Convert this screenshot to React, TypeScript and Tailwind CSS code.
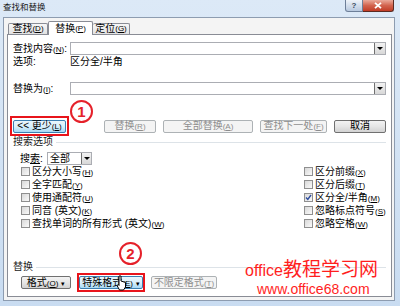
import React from 'react';

const Acc = ({ k }: { k: string }) => (
  <span className="text-[8px]">
    (<span className="underline">{k}</span>)
  </span>
);

type BtnKind = 'normal' | 'hover' | 'disabled';

const btnClass: Record<BtnKind, string> = {
  normal: 'border-[#707070] bg-linear-to-b from-[#f3f3f3] via-[#e6e6e6] to-[#d2d2d2] text-black',
  hover: 'border-[#3c7fb1] bg-linear-to-b from-[#eaf6fd] via-[#d9f0fc] to-[#a7d9f5] text-black',
  disabled: 'border-[#adb2b5] bg-[#f4f4f4] text-[#8d8d8d]',
};

const Btn = ({ w, kind = 'normal', children }: { w: string; kind?: BtnKind; children: React.ReactNode }) => (
  <div className={`${w} h-[13px] shrink-0 flex items-center justify-center rounded-[2px] border ${btnClass[kind]}`}>
    <span className="leading-none whitespace-nowrap">{children}</span>
  </div>
);

const DropInput = () => (
  <div className="flex-1 h-[13px] flex border border-[#abadb3] bg-white">
    <div className="flex-1" />
    <div className="w-[11px] h-full border-l border-[#707070] bg-linear-to-b from-[#f2f2f2] to-[#d8d8d8] flex items-center justify-center">
      <div className="w-0 h-0 border-l-[3px] border-r-[3px] border-t-[3px] border-l-transparent border-r-transparent border-t-black" />
    </div>
  </div>
);

const Check = ({ checked }: { checked?: boolean }) => (
  <span className="w-[9px] h-[9px] shrink-0 border border-[#8f8f8f] bg-linear-to-br from-[#d8d8d8] to-[#fafafa] flex items-center justify-center">
    {checked && (
      <svg width="7" height="7" viewBox="0 0 7 7">
        <path d="M1 3.6 L2.8 5.5 L6 1" fill="none" stroke="#2f4e9e" strokeWidth="1.4" />
      </svg>
    )}
  </span>
);

const CheckRow = ({ label, k, checked }: { label: string; k: string; checked?: boolean }) => (
  <div className="h-[13px] flex items-center gap-[2px]">
    <Check checked={checked} />
    <span className="whitespace-nowrap leading-none">
      {label}
      <Acc k={k} />
    </span>
  </div>
);

const Group = ({ title }: { title: string }) => (
  <div className="h-[12px] flex items-center pl-[5px] pr-[5px]">
    <span className="leading-none text-[#1a1a1a]">{title}</span>
    <div className="flex-1 h-px bg-[#dde3e8] ml-[3px]" />
  </div>
);

export default function App() {
  return (
    <div className="relative w-[400px] h-[306px] overflow-hidden bg-linear-to-b from-[#dce9f7] to-[#c9dcf1] text-[10px] text-black [font-family:'Liberation_Sans','Noto_Sans_CJK_SC',sans-serif]">
      {/* title bar */}
      <div className="h-[17px] flex items-start justify-between">
        <span className="pl-[3px] pt-[2px] text-[8.5px] leading-[10px] text-[#1a1a1a]">查找和替换</span>
        <div className="flex mr-[6px]">
          <div className="w-[18px] h-[12px] rounded-bl-[3px] border border-t-0 border-[#6d7f99] bg-linear-to-b from-[#eef3f9] to-[#b8c9df] flex items-center justify-center text-[8px] font-bold text-[#3b4a60] leading-none">
            ?
          </div>
          <div className="w-[31px] h-[12px] rounded-br-[3px] border border-t-0 border-l-0 border-[#5b2a22] bg-linear-to-b from-[#e9a99a] via-[#d2634e] to-[#c13b25] flex items-center justify-center">
            <svg width="8" height="7" viewBox="0 0 8 7">
              <path d="M1 0.8 L7 6.2 M7 0.8 L1 6.2" stroke="white" strokeWidth="1.8" />
            </svg>
          </div>
        </div>
      </div>

      {/* client */}
      <div className="ml-[3px] w-[392px] h-[284px] border border-[#8d9cb0] bg-[#f4f4f4] flex flex-col">
        <div className="h-[16px] pt-[3px] pl-[4px] flex items-end">
          <div className="w-[40px] h-[11px] border border-b-0 border-[#898c95] rounded-t-[2px] bg-linear-to-b from-[#f7f7f7] to-[#e2e2e2] flex items-center justify-center leading-none">
            查找<Acc k="D" />
          </div>
          <div className="relative z-10 w-[45px] h-[14px] -mb-px border border-b-0 border-[#898c95] rounded-t-[2px] bg-white flex items-center justify-center leading-none">
            替换<Acc k="P" />
          </div>
          <div className="w-[37px] h-[11px] border border-b-0 border-l-0 border-[#898c95] rounded-t-[2px] bg-linear-to-b from-[#f7f7f7] to-[#e2e2e2] flex items-center justify-center leading-none">
            定位<Acc k="G" />
          </div>
        </div>

        {/* tab page */}
        <div className="ml-[3px] w-[385px] h-[263px] border border-[#898c95] bg-white flex flex-col">
          <div className="mt-[7px] h-[13px] flex items-center pl-[5px] pr-[5px]">
            <span className="w-[57px] leading-none whitespace-nowrap">
              查找内容<Acc k="N" />:
            </span>
            <DropInput />
          </div>
          <div className="mt-[1px] h-[12px] flex items-center pl-[5px]">
            <span className="w-[57px] leading-none">选项:</span>
            <span className="leading-none">区分全/半角</span>
          </div>
          <div className="mt-[14px] h-[13px] flex items-center pl-[5px] pr-[5px]">
            <span className="w-[57px] leading-none whitespace-nowrap">
              替换为<Acc k="I" />:
            </span>
            <DropInput />
          </div>

          <div className="mt-[21px] h-[20px] flex items-center">
            <div className="ml-[2px] w-[59px] h-[20px] border-2 border-[#e8141b] flex items-center justify-center">
              <Btn w="w-[53px]" kind="hover">
                &lt;&lt; 更少<Acc k="L" />
              </Btn>
            </div>
            <div className="ml-[35px]">
              <Btn w="w-[52px]" kind="disabled">
                替换<Acc k="R" />
              </Btn>
            </div>
            <div className="ml-[7px]">
              <Btn w="w-[90px]" kind="disabled">
                全部替换<Acc k="A" />
              </Btn>
            </div>
            <div className="ml-[7px]">
              <Btn w="w-[67px]" kind="disabled">
                查找下一处<Acc k="F" />
              </Btn>
            </div>
            <div className="ml-[7px]">
              <Btn w="w-[52px]">取消</Btn>
            </div>
          </div>

          <Group title="搜索选项" />

          <div className="mt-[4px] h-[13px] flex items-center pl-[12px]">
            <span className="w-[27px] leading-none whitespace-nowrap">
              搜<span className="underline">索</span>:
            </span>
            <div className="w-[45px] h-[13px] flex border border-[#abadb3] bg-white">
              <span className="flex-1 pl-[2px] leading-[11px]">全部</span>
              <div className="w-[10px] h-full border-l border-[#707070] bg-linear-to-b from-[#f2f2f2] to-[#d8d8d8] flex items-center justify-center">
                <div className="w-0 h-0 border-l-[3px] border-r-[3px] border-t-[3px] border-l-transparent border-r-transparent border-t-black" />
              </div>
            </div>
          </div>

          <div className="flex">
            <div className="pl-[13px] flex flex-col w-[296px]">
              <CheckRow label="区分大小写" k="H" />
              <CheckRow label="全字匹配" k="Y" />
              <CheckRow label="使用通配符" k="U" />
              <CheckRow label="同音 (英文)" k="K" />
              <CheckRow label="查找单词的所有形式 (英文)" k="W" />
            </div>
            <div className="flex flex-col">
              <CheckRow label="区分前缀" k="X" />
              <CheckRow label="区分后缀" k="T" />
              <CheckRow label="区分全/半角" k="M" checked />
              <CheckRow label="忽略标点符号" k="S" />
              <CheckRow label="忽略空格" k="W" />
            </div>
          </div>

          <div className="mt-[31px]">
            <Group title="替换" />
          </div>

          <div className="h-[19px] flex items-center">
            <div className="ml-[13px]">
              <Btn w="w-[50px]">
                格式<Acc k="O" /> <span className="text-[7px]">▾</span>
              </Btn>
            </div>
            <div className="ml-[6px] w-[68px] h-[19px] border-2 border-[#e8141b] flex items-center justify-center">
              <Btn w="w-[64px]" kind="hover">
                特殊格式<Acc k="E" /> <span className="text-[7px]">▾</span>
              </Btn>
            </div>
            <div className="ml-[6px]">
              <Btn w="w-[66px]" kind="disabled">
                不限定格式<Acc k="T" />
              </Btn>
            </div>
          </div>
        </div>
      </div>

      {/* annotations */}
      <div className="absolute left-[70px] top-[100px] w-[23px] h-[23px] rounded-full border-2 border-[#e5212a] bg-white flex items-center justify-center text-[15px] font-bold text-[#e5212a] leading-none">
        1
      </div>
      <div className="absolute left-[119px] top-[242px] w-[23px] h-[23px] rounded-full border-2 border-[#e5212a] bg-white flex items-center justify-center text-[15px] font-bold text-[#e5212a] leading-none">
        2
      </div>
      <svg className="absolute left-[116px] top-[275px]" width="11" height="16" viewBox="0 0 11 16">
        <path d="M3 1 L5 1 L5 6 L9.5 7.5 L9.5 12 L7.5 15 L3.5 15 L1 10.5 L2.5 9.5 L3 10.5 Z" fill="white" stroke="black" strokeWidth="1" />
      </svg>

      {/* watermark */}
      <div className="absolute left-[245px] top-[258px] flex items-baseline text-[#ff1e1e] whitespace-nowrap leading-[20px]">
        <span className="text-[16px]">office</span>
        <span className="text-[19px] [font-family:'Noto_Sans_CJK_SC',sans-serif]">教程学习网</span>
      </div>
      <div className="absolute left-[257px] top-[281px] text-[14px] leading-[16px] text-[#ff1e1e] whitespace-nowrap">
        www.office68.com
      </div>
    </div>
  );
}
